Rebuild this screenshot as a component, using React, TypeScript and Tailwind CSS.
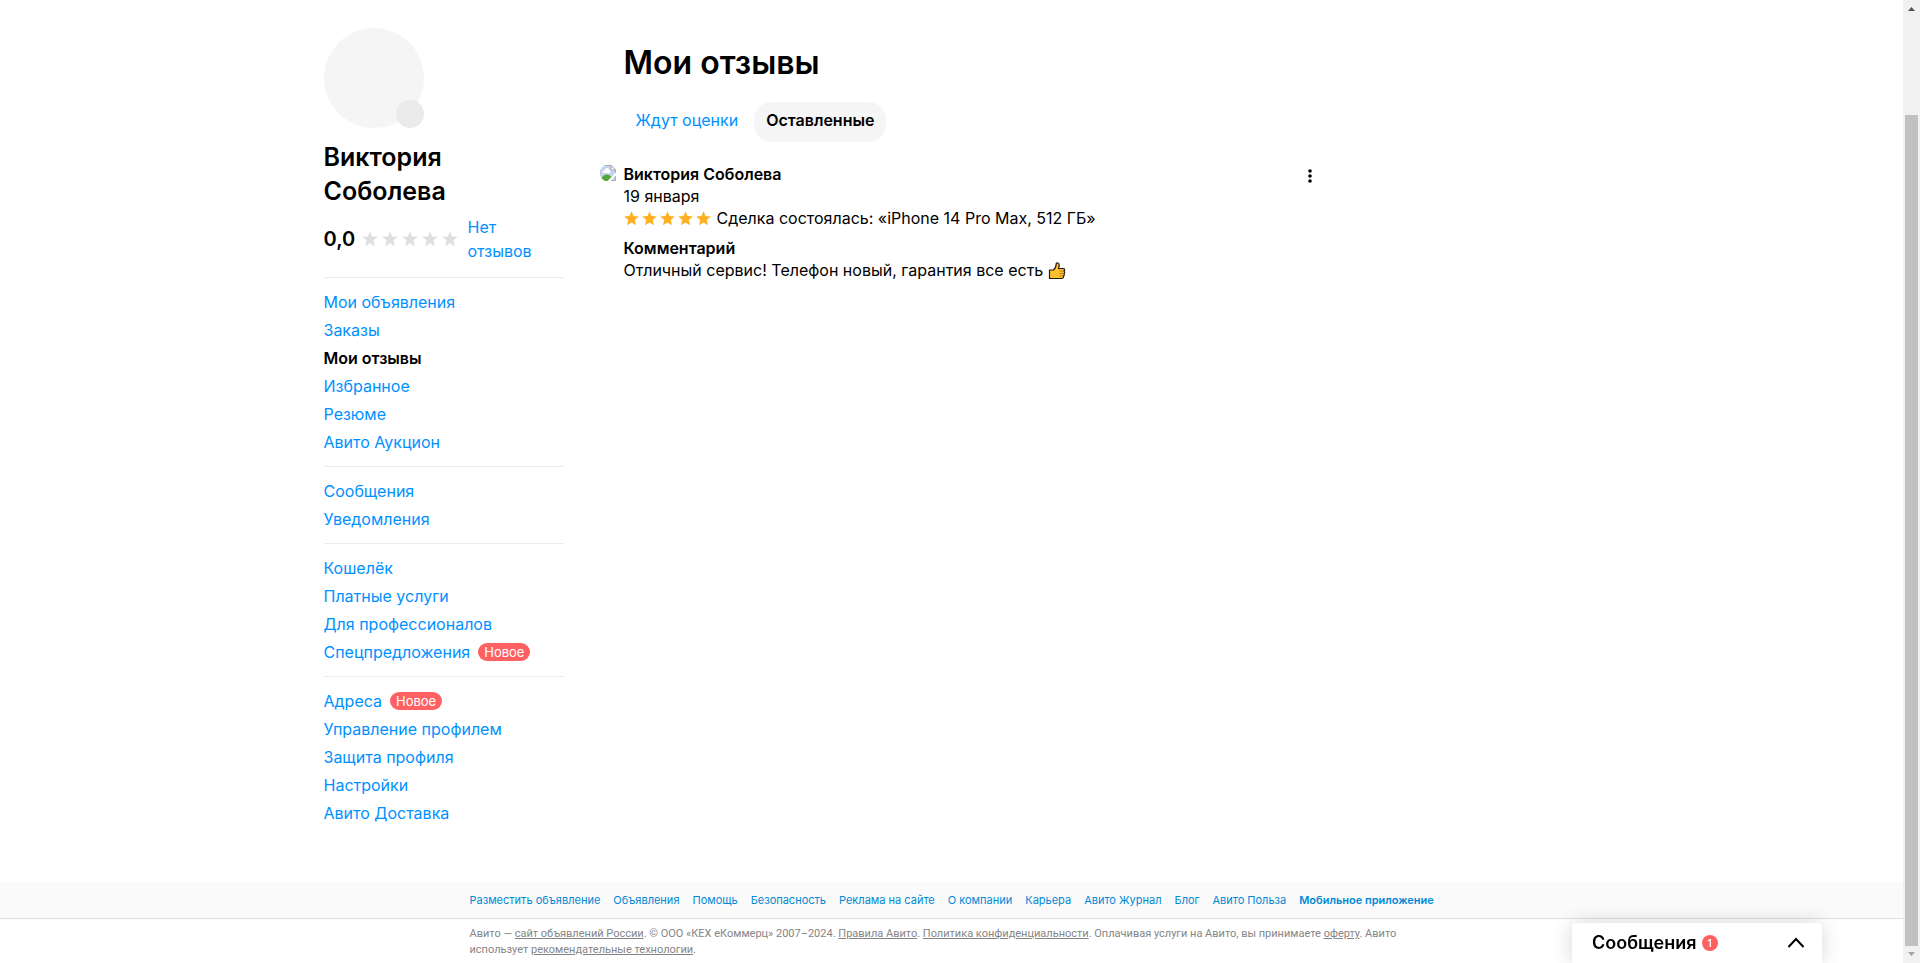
import React from "react";

type NavItem = { label: string; active?: boolean; isNew?: boolean };

const navGroups: NavItem[][] = [
  [
    { label: "Мои объявления" },
    { label: "Заказы" },
    { label: "Мои отзывы", active: true },
    { label: "Избранное" },
    { label: "Резюме" },
    { label: "Авито Аукцион" },
  ],
  [{ label: "Сообщения" }, { label: "Уведомления" }],
  [
    { label: "Кошелёк" },
    { label: "Платные услуги" },
    { label: "Для профессионалов" },
    { label: "Спецпредложения", isNew: true },
  ],
  [
    { label: "Адреса", isNew: true },
    { label: "Управление профилем" },
    { label: "Защита профиля" },
    { label: "Настройки" },
    { label: "Авито Доставка" },
  ],
];

const footerLinks = [
  "Разместить объявление",
  "Объявления",
  "Помощь",
  "Безопасность",
  "Реклама на сайте",
  "О компании",
  "Карьера",
  "Авито Журнал",
  "Блог",
  "Авито Польза",
];

function Star({ className }: { className: string }) {
  return (
    <svg viewBox="0 0 16 16" className={className} fill="currentColor" aria-hidden="true">
      <path d="M8 0.2 10.1 5.4 15.8 5.8 11.4 9.6 12.9 15.2 8 12.3 3.1 15.2 4.6 9.6 0.2 5.8 5.9 5.4Z" />
    </svg>
  );
}

function Stars({ className, starClass }: { className: string; starClass: string }) {
  return (
    <span className={className}>
      {[1, 2, 3, 4, 5].map((n) => (
        <Star key={n} className={starClass} />
      ))}
    </span>
  );
}

function MissingImage() {
  return (
    <svg viewBox="0 0 16 16" className="mt-[2px] size-4 shrink-0" role="img" aria-label="Фото пользователя">
      <defs>
        <clipPath id="photo-clip">
          <path d="M7 0H16V16H7A7 8 0 0 1 7 0Z" />
        </clipPath>
      </defs>
      <g clipPath="url(#photo-clip)">
        <path d="M0 0.5H11L15.5 5V15.5H0Z" fill="#c3d4f3" stroke="#a8a8a8" />
        <path d="M3 7a2 2 0 0 1 2-2 2 2 0 0 1 4 0 1.5 1.5 0 0 1 0 3H3Z" fill="#fff" />
        <path d="M0 15C3 10 6 8.500 9 10L12 12 8 16H0Z" fill="#52a836" />
        <path d="M16 7.500 7.500 16H10.500L16 10.500Z" fill="#fff" />
        <path d="M11 0.500V5H15.500Z" fill="#fff" stroke="#a8a8a8" />
      </g>
    </svg>
  );
}

function ThumbUp() {
  return (
    <svg viewBox="0 0 18 18" className="inline-block size-[18px] align-text-bottom" role="img" aria-label="👍">
      <path
        d="M1.500 8H5.500C7 6.800 8 5 8.300 1.500 8.500 0.600 11 0.600 11.200 3 11.300 4.500 10.800 5.700 10.500 6.500H15.300C16.800 6.500 17 8.300 15.900 9 17 9.600 16.900 11 15.900 11.500 16.600 12.200 16.400 13.500 15.400 14 15.900 15.300 15 16.500 13.800 16.500H1.500Z"
        fill="#ffc02e"
        stroke="#1d1a12"
        strokeWidth="1.200"
        strokeLinejoin="round"
      />
      <path d="M11.500 9H15.500M11.500 11.500H15.500M11.500 14H15" stroke="#a97412" strokeWidth="0.800" />
    </svg>
  );
}

function Sidebar() {
  return (
    <aside className="w-60 shrink-0">
      <div className="relative size-[100px] rounded-full bg-[#f5f5f5]">
        <span className="absolute right-0 bottom-0 size-7 rounded-full bg-[#ebebeb]" />
      </div>
      <h2 className="mt-3 w-40 text-[25px] leading-[34px] font-semibold">Виктория Соболева</h2>
      <div className="mt-[7px] flex items-center">
        <span className="w-[38px] text-xl leading-6 font-semibold">0,0</span>
        <Stars className="flex gap-1 text-[#e0e0e0]" starClass="size-4" />
        <a href="#reviews" className="ml-[10px] w-20 text-base leading-6 text-[#0091ff]">
          Нет отзывов
        </a>
      </div>
      <nav className="mt-[14px]">
        {navGroups.map((group, i) => (
          <ul key={i} className="border-t border-[#ebebeb] py-[10px]">
            {group.map((item) => (
              <li key={item.label} className="flex h-7 items-center gap-2 whitespace-nowrap">
                <a
                  href="#section"
                  className={
                    item.active
                      ? "text-base leading-5 font-semibold text-black"
                      : "text-base leading-5 text-[#0091ff]"
                  }
                >
                  {item.label}
                </a>
                {item.isNew && (
                  <span className="rounded-full bg-[#ff6163] px-[6px] text-[13px] leading-[18px] text-white">
                    Новое
                  </span>
                )}
              </li>
            ))}
          </ul>
        ))}
      </nav>
    </aside>
  );
}

function Reviews() {
  return (
    <main className="w-[728px] min-w-0 pt-4">
      <h1 className="ml-6 text-[32px] leading-[38px] font-semibold">Мои отзывы</h1>
      <div className="mt-5 ml-6 flex gap-1">
        <button type="button" className="h-10 rounded-[18px] px-3 pb-1 text-base text-[#0091ff]">
          Ждут оценки
        </button>
        <button
          type="button"
          className="h-10 rounded-[18px] bg-[#f5f5f5] px-3 pb-1 text-base font-semibold"
        >
          Оставленные
        </button>
      </div>
      <article className="mt-[21px] flex text-base leading-[22px]">
        <MissingImage />
        <div className="ml-2 flex-1">
          <h3 className="font-semibold">Виктория Соболева</h3>
          <p>19 января</p>
          <p className="flex items-center">
            <Stars className="mr-[6px] flex gap-[3px] text-[#ffb021]" starClass="size-[15px]" />
            Сделка состоялась: «iPhone 14 Pro Max, 512 ГБ»
          </p>
          <h4 className="mt-2 font-semibold">Комментарий</h4>
          <p>
            Отличный сервис! Телефон новый, гарантия все есть <ThumbUp />
          </p>
        </div>
        <button type="button" aria-label="Ещё" className="flex h-[26px] w-9 items-center justify-center">
          <svg viewBox="0 0 4 14" className="h-[14px] w-1" aria-hidden="true">
            <circle cx="2" cy="2" r="1.800" />
            <circle cx="2" cy="7" r="1.800" />
            <circle cx="2" cy="12" r="1.800" />
          </svg>
        </button>
      </article>
    </main>
  );
}

function Footer() {
  return (
    <footer>
      <div className="border-b border-[#dedede] bg-[#fafafa]">
        <nav className="mx-auto flex w-[964px] gap-[13px] text-[11px] leading-9 whitespace-nowrap text-[#0089d6]">
          {footerLinks.map((label) => (
            <a key={label} href="#footer">
              {label}
            </a>
          ))}
          <a href="#app" className="font-semibold">
            Мобильное приложение
          </a>
        </nav>
      </div>
      <p className="mx-auto w-[964px] pt-[7px] pb-[5px] font-['Roboto','Noto_Sans',sans-serif] text-[11px] leading-4 text-[#858585]">
        Авито —{" "}
        <a href="#about" className="underline">
          сайт объявлений России
        </a>
        . © ООО «КЕХ еКоммерц» 2007–2024.{" "}
        <a href="#rules" className="underline">
          Правила Авито
        </a>
        .{" "}
        <a href="#privacy" className="underline">
          Политика конфиденциальности
        </a>
        . Оплачивая услуги на Авито, вы принимаете{" "}
        <a href="#offer" className="underline">
          оферту
        </a>
        . Авито
        <br />
        использует{" "}
        <a href="#tech" className="underline">
          рекомендательные технологии
        </a>
        .
      </p>
    </footer>
  );
}

function ChatBar() {
  return (
    <button
      type="button"
      className="fixed right-[98px] bottom-0 flex h-10 w-[250px] items-center rounded-t bg-white pr-[17px] pl-5 shadow-[0_0_20px_rgba(0,0,0,0.16)]"
    >
      <span className="text-lg leading-6 font-semibold">Сообщения</span>
      <span className="ml-[5px] size-4 rounded-full bg-[#ff6163] text-center text-[11px] leading-4 font-medium text-white">
        1
      </span>
      <svg
        viewBox="0 0 18 12"
        className="ml-auto h-3 w-[18px]"
        fill="none"
        stroke="currentColor"
        strokeWidth="2"
        aria-hidden="true"
      >
        <path d="M1.500 10 9 2 16.500 10" />
      </svg>
    </button>
  );
}

function ScrollTrack() {
  return (
    <div className="sticky top-0 flex h-screen w-[17px] shrink-0 flex-col items-center bg-[#f1f1f1]" aria-hidden="true">
      <svg viewBox="0 0 17 17" className="size-[17px] shrink-0">
        <path d="M5 11 8.500 7 12 11Z" fill="#505050" />
      </svg>
      <div className="mt-[98px] w-[13px] flex-1 bg-[#c1c1c1]" />
      <svg viewBox="0 0 17 17" className="size-[17px] shrink-0">
        <path d="M5 6 8.500 10 12 6Z" fill="#a3a3a3" />
      </svg>
    </div>
  );
}

export default function App() {
  return (
    <div className="flex bg-white font-['Inter','Noto_Sans',sans-serif] text-black">
      <div className="flex min-h-screen min-w-0 flex-1 flex-col">
        <div className="mx-auto flex w-full max-w-[1256px] flex-1 gap-9 pt-7 pb-11">
          <Sidebar />
          <Reviews />
        </div>
        <Footer />
      </div>
      <ScrollTrack />
      <ChatBar />
    </div>
  );
}
